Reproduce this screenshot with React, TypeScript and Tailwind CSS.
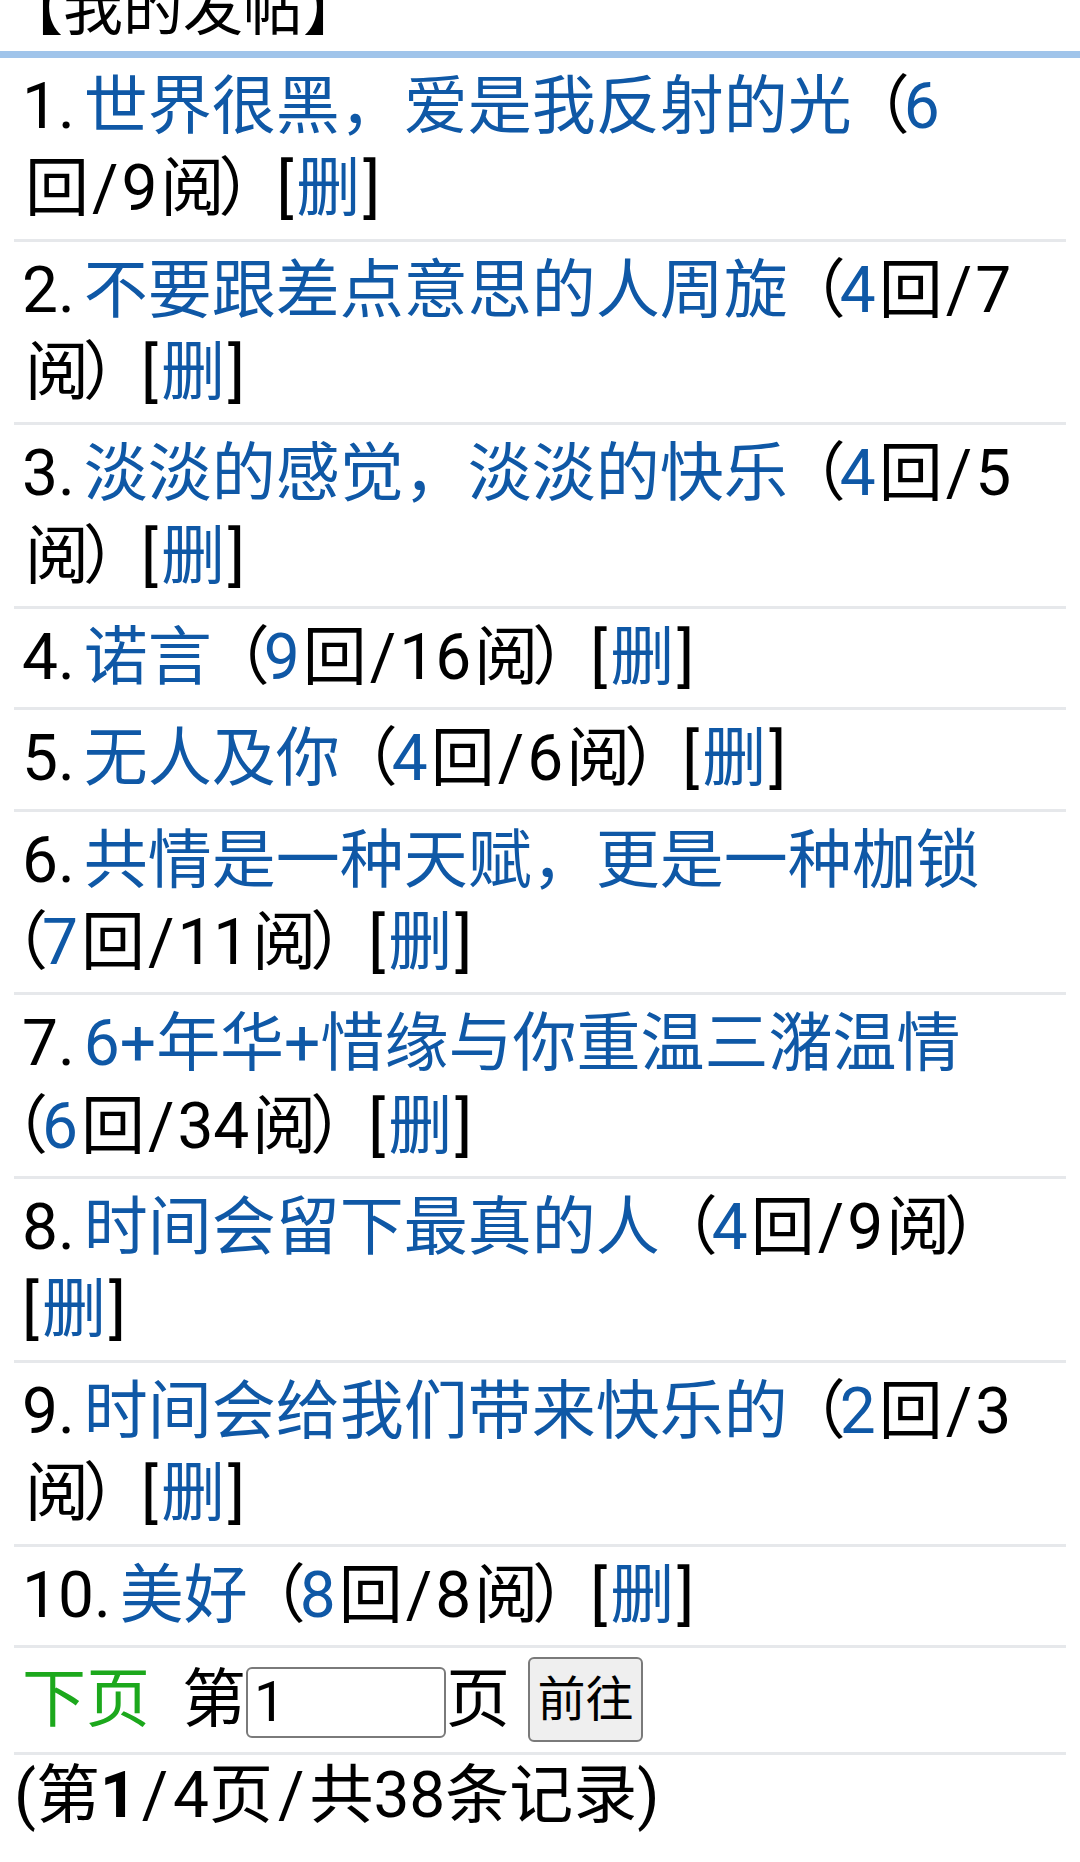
import React from 'react'

interface Post {
  title: string
  replies: number
  views: number
}

const POSTS: Post[] = [
  { title: '世界很黑，爱是我反射的光', replies: 6, views: 9 },
  { title: '不要跟差点意思的人周旋', replies: 4, views: 7 },
  { title: '淡淡的感觉，淡淡的快乐', replies: 4, views: 5 },
  { title: '诺言', replies: 9, views: 16 },
  { title: '无人及你', replies: 4, views: 6 },
  { title: '共情是一种天赋，更是一种枷锁', replies: 7, views: 11 },
  { title: '6+年华+惜缘与你重温三潴温情', replies: 6, views: 34 },
  { title: '时间会留下最真的人', replies: 4, views: 9 },
  { title: '时间会给我们带来快乐的', replies: 2, views: 3 },
  { title: '美好', replies: 8, views: 8 },
]

const LINK = 'text-[#0f58a6]'

function PostRow({ post, index }: { post: Post; index: number }) {
  return (
    <div className="border-b-[3px] border-[#e6e8eb] pl-[8px] pr-[30px] py-[8px] [text-spacing-trim:trim-start]">
      {index + 1}.<a href="#" className={`ml-[9px] ${LINK}`}>{post.title}</a>
      <span className="-mx-[6px]">（</span>
      <a href="#" className={LINK}>{post.replies}</a>
      <span className="ml-[3px]">回</span>
      <span className="mx-[3px]">/</span>
      {post.views}
      <span className="ml-[3px]">阅</span>
      <span className="-mx-[6px]">）</span>
      <span className="mr-[3px]">[</span>
      <a href="#" className={LINK}>删</a>
      <span className="ml-[3px]">]</span>
    </div>
  )
}

export default function App() {
  return (
    <div className="min-h-[1862px] overflow-hidden bg-white text-black [font-family:Roboto,'Noto_Sans_CJK_SC',sans-serif] text-[64px] leading-[82.35px]">
      {/* 标题 */}
      <div className="-mt-[31px] pl-[3px] text-[60px] leading-[82px]">【我的发帖】</div>
      <div className="h-[7px] bg-[#a0c4ea]" />

      <div className="mx-[14px]">
        {POSTS.map((p, i) => (
          <PostRow key={i} post={p} index={i} />
        ))}

        {/* 分页 */}
        <div className="flex h-[107px] items-center border-b-[3px] border-[#e6e8eb] px-[8px]">
          <a href="#" className="text-[#1ca81c]">下页</a>
          <span className="ml-[32px]">第</span>
          <input
            defaultValue="1"
            className="mt-[5px] h-[71px] w-[200px] rounded-[6px] border-2 border-[#7a7a7a] bg-white pl-[6px] text-[56px] leading-normal text-black outline-none"
          />
          <span>页</span>
          <button className="ml-[18px] h-[85px] w-[115px] rounded-[6px] border-2 border-[#7a7a7a] bg-[#efefef] text-[48px] leading-none text-black">
            前往
          </button>
        </div>

        <div>
          (第<b>1</b><span className="mx-[5px]">/</span>4页<span className="mx-[5px]">/</span>共38条记录)
        </div>
      </div>
    </div>
  )
}
